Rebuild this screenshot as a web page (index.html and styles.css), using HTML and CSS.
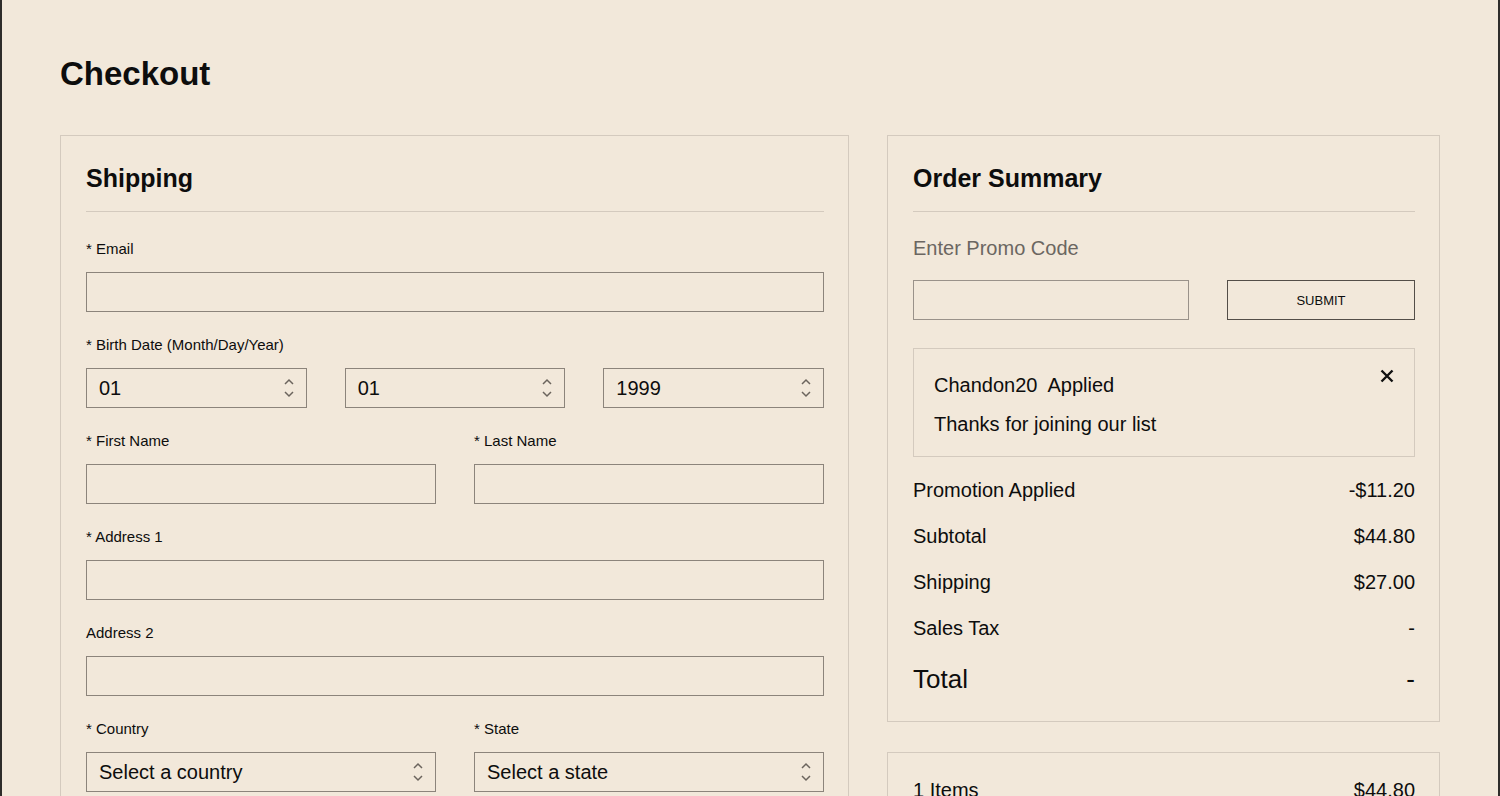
FILE: index.html
```html
<!DOCTYPE html>
<html lang="en">
<head>
    <meta charset="UTF-8">
    <meta name="viewport" content="width=device-width, initial-scale=1.0">
    <title>Checkout</title>
    <link rel="stylesheet" href="styles.css">
</head>
<body>
    <main class="page">
        <h1 class="page-title">Checkout</h1>

        <div class="checkout">
            <!-- Shipping form -->
            <section class="card">
                <h2 class="card-title">Shipping</h2>

                <div class="field">
                    <label for="email">* Email</label>
                    <input id="email" type="email">
                </div>

                <div class="field">
                    <label>* Birth Date (Month/Day/Year)</label>
                    <div class="row three">
                        <div class="select-wrap">
                            <select><option>01</option></select>
                            <svg class="chevrons" width="10" height="20" viewBox="0 0 10 20"><path d="M1 6 L5 2 L9 6 M1 14 L5 18 L9 14"/></svg>
                        </div>
                        <div class="select-wrap">
                            <select><option>01</option></select>
                            <svg class="chevrons" width="10" height="20" viewBox="0 0 10 20"><path d="M1 6 L5 2 L9 6 M1 14 L5 18 L9 14"/></svg>
                        </div>
                        <div class="select-wrap">
                            <select><option>1999</option></select>
                            <svg class="chevrons" width="10" height="20" viewBox="0 0 10 20"><path d="M1 6 L5 2 L9 6 M1 14 L5 18 L9 14"/></svg>
                        </div>
                    </div>
                </div>

                <div class="row two">
                    <div class="field">
                        <label for="first-name">* First Name</label>
                        <input id="first-name" type="text">
                    </div>
                    <div class="field">
                        <label for="last-name">* Last Name</label>
                        <input id="last-name" type="text">
                    </div>
                </div>

                <div class="field">
                    <label for="address1">* Address 1</label>
                    <input id="address1" type="text">
                </div>

                <div class="field">
                    <label for="address2">Address 2</label>
                    <input id="address2" type="text">
                </div>

                <div class="row two">
                    <div class="field">
                        <label>* Country</label>
                        <div class="select-wrap">
                            <select><option>Select a country</option></select>
                            <svg class="chevrons" width="10" height="20" viewBox="0 0 10 20"><path d="M1 6 L5 2 L9 6 M1 14 L5 18 L9 14"/></svg>
                        </div>
                    </div>
                    <div class="field">
                        <label>* State</label>
                        <div class="select-wrap">
                            <select><option>Select a state</option></select>
                            <svg class="chevrons" width="10" height="20" viewBox="0 0 10 20"><path d="M1 6 L5 2 L9 6 M1 14 L5 18 L9 14"/></svg>
                        </div>
                    </div>
                </div>

                <div class="row two">
                    <div class="field">
                        <label for="city">* City</label>
                        <input id="city" type="text">
                    </div>
                    <div class="field">
                        <label for="zip">* Zip Code</label>
                        <input id="zip" type="text">
                    </div>
                </div>
            </section>

            <!-- Right column -->
            <aside class="side">
                <section class="card summary">
                    <h2 class="card-title">Order Summary</h2>

                    <p class="promo-label">Enter Promo Code</p>
                    <div class="promo-row">
                        <input type="text" aria-label="Promo code">
                        <button class="submit-btn">SUBMIT</button>
                    </div>

                    <div class="promo-applied">
                        <p>Chandon20&nbsp; Applied</p>
                        <p>Thanks for joining our list</p>
                        <button class="remove-btn" aria-label="Remove promo">
                            <svg width="14" height="14" viewBox="0 0 14 14"><path d="M1.5 1.5 L12.5 12.5 M12.5 1.5 L1.5 12.5"/></svg>
                        </button>
                    </div>

                    <div class="line"><span>Promotion Applied</span><span>-$11.20</span></div>
                    <div class="line"><span>Subtotal</span><span>$44.80</span></div>
                    <div class="line"><span>Shipping</span><span>$27.00</span></div>
                    <div class="line"><span>Sales Tax</span><span>-</span></div>
                    <div class="line total"><span>Total</span><span>-</span></div>
                </section>

                <section class="card items">
                    <div class="line"><span>1 Items</span><span>$44.80</span></div>
                    <div class="line"><span>Brut Classic 750ml</span><span>$44.80</span></div>
                </section>
            </aside>
        </div>
    </main>
</body>
</html>
```

FILE: styles.css
```css
:root {
    --bg-color: #f2e8da;
    --text-color: #0d0d0d;
    --card-border: #d4cabe;
    --input-border: #8c847b;
    --muted: #6b6661;
}
* { box-sizing: border-box; }
body {
    font-family: "Liberation Sans", Arial, sans-serif;
    background-color: var(--bg-color);
    color: var(--text-color);
    margin: 0;
    border-left: 2px solid #2e2c2a;
    border-right: 2px solid #2e2c2a;
    min-height: 100vh;
}
p { margin: 0; }
.page {
    padding: 54px 58px 40px;
}
.page-title {
    font-size: 33px;
    line-height: 40px;
    font-weight: 700;
    margin: 0 0 41px;
}
.checkout {
    display: grid;
    grid-template-columns: 789px 1fr;
    gap: 38px;
    align-items: start;
}
.card {
    border: 1px solid var(--card-border);
    padding: 27px 24px 27px 25px;
}
.card-title {
    font-size: 25px;
    line-height: 30px;
    font-weight: 700;
    margin: 0 0 27px;
    padding-bottom: 18px;
    border-bottom: 1px solid var(--card-border);
}
.field {
    margin-bottom: 23px;
}
.field label {
    display: block;
    font-size: 15px;
    line-height: 20px;
    margin-bottom: 13px;
}
.row {
    display: grid;
    gap: 38px;
}
.row.two { grid-template-columns: 1fr 1fr; }
.row.three { grid-template-columns: 1fr 1fr 1fr; }
.row > .field { margin-bottom: 23px; }
input, select {
    display: block;
    width: 100%;
    height: 40px;
    background: transparent;
    border: 1px solid var(--input-border);
    border-radius: 0;
    font-family: inherit;
    font-size: 20px;
    color: var(--text-color);
    padding: 0 12px;
}
select {
    appearance: none;
    -webkit-appearance: none;
    padding-right: 36px;
}
.select-wrap {
    position: relative;
}
.chevrons {
    position: absolute;
    right: 13px;
    top: 10px;
    pointer-events: none;
}
.chevrons path {
    fill: none;
    stroke: #6b645d;
    stroke-width: 1.5;
}

/* Order summary */
.side {
    display: flex;
    flex-direction: column;
    gap: 30px;
}
.summary .card-title {
    margin-bottom: 24px;
}
.promo-label {
    font-size: 20px;
    line-height: 24px;
    color: var(--muted);
    margin-bottom: 20px;
}
.promo-row {
    display: grid;
    grid-template-columns: 1fr 188px;
    gap: 38px;
    margin-bottom: 28px;
}
.promo-row input {
    border-color: #9a928a;
}
.submit-btn {
    height: 40px;
    background: transparent;
    border: 1.5px solid #544e48;
    font-family: inherit;
    font-size: 13px;
    color: var(--text-color);
    cursor: pointer;
}
.promo-applied {
    position: relative;
    border: 1px solid var(--card-border);
    padding: 24px 20px 20px;
    margin-bottom: 21px;
}
.promo-applied p {
    font-size: 20px;
    line-height: 24px;
}
.promo-applied p + p {
    margin-top: 15px;
}
.remove-btn {
    position: absolute;
    top: 20px;
    right: 20px;
    background: none;
    border: none;
    padding: 0;
    width: 14px;
    height: 14px;
    cursor: pointer;
}
.remove-btn svg { display: block; }
.remove-btn path {
    stroke: #111;
    stroke-width: 2.4;
    fill: none;
}
.line {
    display: flex;
    justify-content: space-between;
    font-size: 20px;
    line-height: 24px;
    margin-bottom: 22px;
}
.line.total {
    font-size: 26px;
    line-height: 30px;
    margin-top: 24px;
    margin-bottom: 0;
}
.items {
    padding-top: 25px;
}
```
